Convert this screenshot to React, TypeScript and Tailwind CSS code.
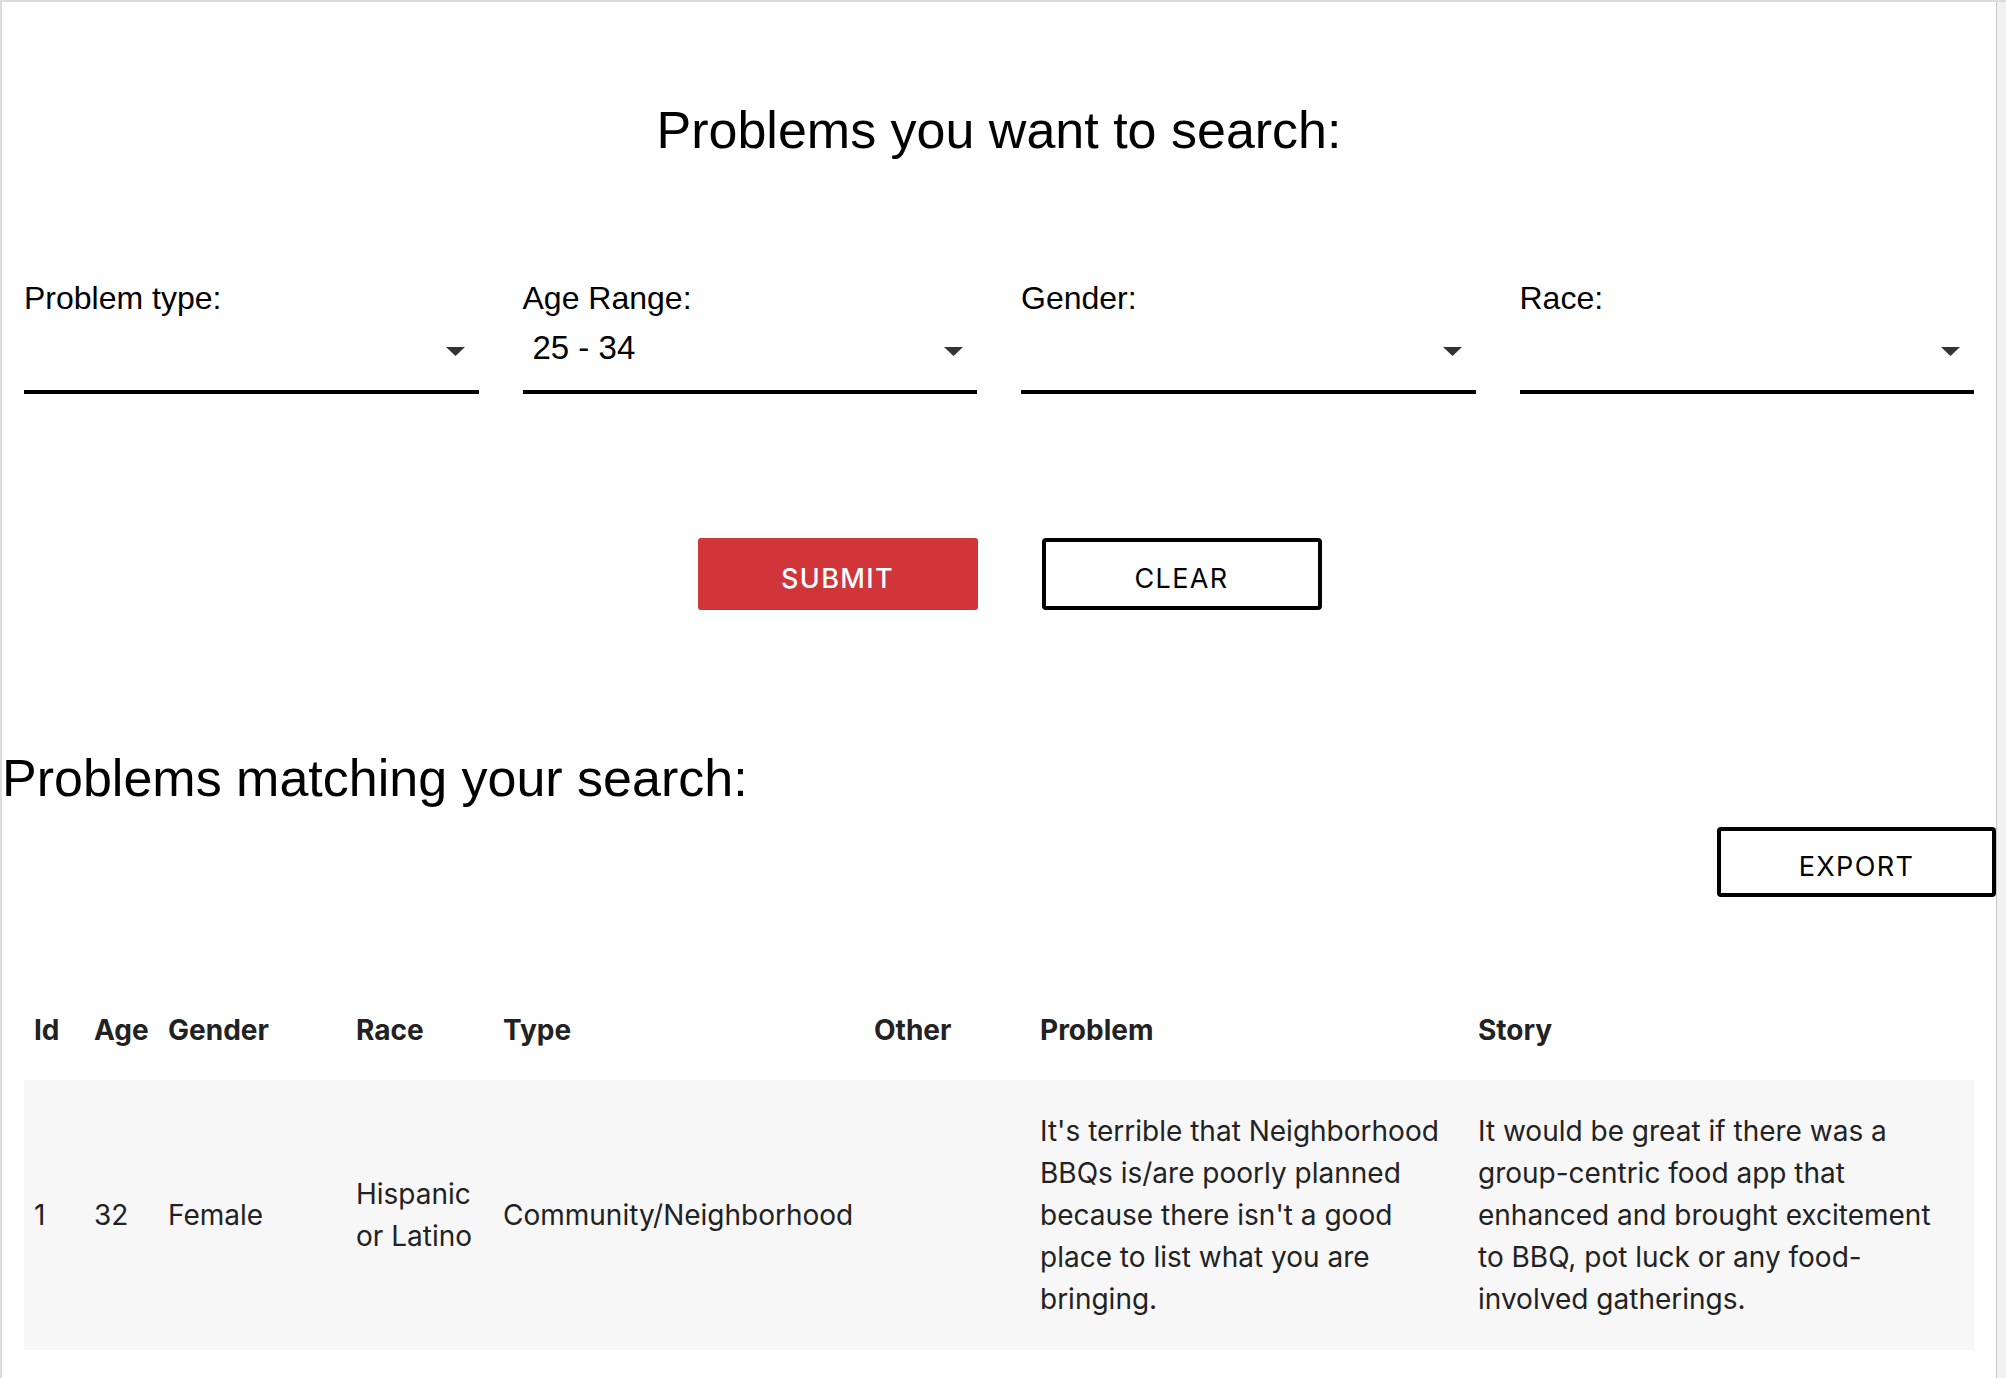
import { useState } from 'react';

type Problem = {
  id: number;
  age: number;
  gender: string;
  race: string;
  type: string;
  other: string;
  problem: string;
  story: string;
};

const rows: Problem[] = [
  {
    id: 1,
    age: 32,
    gender: 'Female',
    race: 'Hispanic or Latino',
    type: 'Community/Neighborhood',
    other: '',
    problem: "It's terrible that Neighborhood BBQs is/are poorly planned because there isn't a good place to list what you are bringing.",
    story:
      'It would be great if there was a group-centric food app that enhanced and brought excitement to BBQ, pot luck or any food-involved gatherings.'
  }
];

const columns = [
  { key: 'id', label: 'Id', width: 'w-[60px]' },
  { key: 'age', label: 'Age', width: 'w-[74px]' },
  { key: 'gender', label: 'Gender', width: 'w-[188px]' },
  { key: 'race', label: 'Race', width: 'w-[147px]' },
  { key: 'type', label: 'Type', width: 'w-[371px]' },
  { key: 'other', label: 'Other', width: 'w-[166px]' },
  { key: 'problem', label: 'Problem', width: 'w-[438px]' },
  { key: 'story', label: 'Story', width: 'w-[506px]' }
] as const;

const Caret = () => (
  <svg width="19" height="9" viewBox="0 0 19 9" className="mt-[19px] shrink-0">
    <path d="M0 0 L19 0 L9.5 9 Z" fill="#333" />
  </svg>
);

const SelectField = ({ label, value }: { label: string; value: string }) => (
  <div>
    <div className="text-[32px] leading-none text-black">{label}</div>
    <div className="mt-[14px] flex h-[66px] items-start justify-between border-b-4 border-black pl-[10px] pr-[14px]">
      <span className="mt-[3px] text-[33px] leading-none text-black">{value}</span>
      <Caret />
    </div>
  </div>
);

export default function App() {
  const [ageRange] = useState('25 - 34');

  return (
    <div className="flex h-[1378px] w-full overflow-hidden border-t-2 border-[#dcdcdc] bg-white font-['Liberation_Sans',Arial,sans-serif]">
      <main className="flex-1 border-l-2 border-[#dcdcdc]">
        <h1 className="mt-[102px] text-center text-[52px] leading-none text-black">Problems you want to search:</h1>

        <div className="mx-[22px] mt-[126px] grid grid-cols-4 gap-x-[44px]">
          <SelectField label="Problem type:" value="" />
          <SelectField label="Age Range:" value={ageRange} />
          <SelectField label="Gender:" value="" />
          <SelectField label="Race:" value="" />
        </div>

        <div className="mt-[144px] flex justify-center gap-[64px] pl-[21px] font-['Inter',sans-serif]">
          <button className="h-[72px] w-[280px] rounded-[3px] bg-[#cf3539] pt-[10px] text-[27px] font-medium tracking-[0.05em] text-white">
            SUBMIT
          </button>
          <button className="h-[72px] w-[280px] rounded-[4px] border-4 border-black bg-white pt-[10px] text-[27px] tracking-[0.05em] text-black">
            CLEAR
          </button>
        </div>

        <h2 className="mt-[142px] text-[52px] leading-none text-black">Problems matching your search:</h2>

        <div className="mt-[23px] flex justify-end">
          <button className="h-[70px] w-[279px] rounded-[4px] border-4 border-black bg-white pt-[10px] font-['Inter',sans-serif] text-[27px] tracking-[0.05em] text-black">
            EXPORT
          </button>
        </div>

        <table className="mx-[22px] mt-[82px] w-[1950px] table-fixed border-collapse font-['Inter',sans-serif] text-[28px] leading-[42px] text-[#222]">
          <thead>
            <tr>
              {columns.map((col) => (
                <th key={col.key} className={`${col.width} px-[10px] pb-[29px] pt-[30px] text-left font-bold`}>
                  {col.label}
                </th>
              ))}
            </tr>
          </thead>
          <tbody>
            {rows.map((row) => (
              <tr key={row.id} className="bg-[#f7f7f7]">
                <td className="px-[10px] py-[30px] align-middle">{row.id}</td>
                <td className="px-[10px] py-[30px] align-middle">{row.age}</td>
                <td className="px-[10px] py-[30px] align-middle">{row.gender}</td>
                <td className="px-[10px] py-[30px] align-middle">{row.race}</td>
                <td className="px-[10px] py-[30px] align-middle">{row.type}</td>
                <td className="px-[10px] py-[30px] align-middle">{row.other}</td>
                <td className="px-[10px] py-[30px] align-middle">{row.problem}</td>
                <td className="px-[10px] py-[30px] align-middle">{row.story}</td>
              </tr>
            ))}
          </tbody>
        </table>
      </main>
      <div className="w-[10px] border-l border-[#c9c9c9] bg-[#f1f1f1]" />
    </div>
  );
}
